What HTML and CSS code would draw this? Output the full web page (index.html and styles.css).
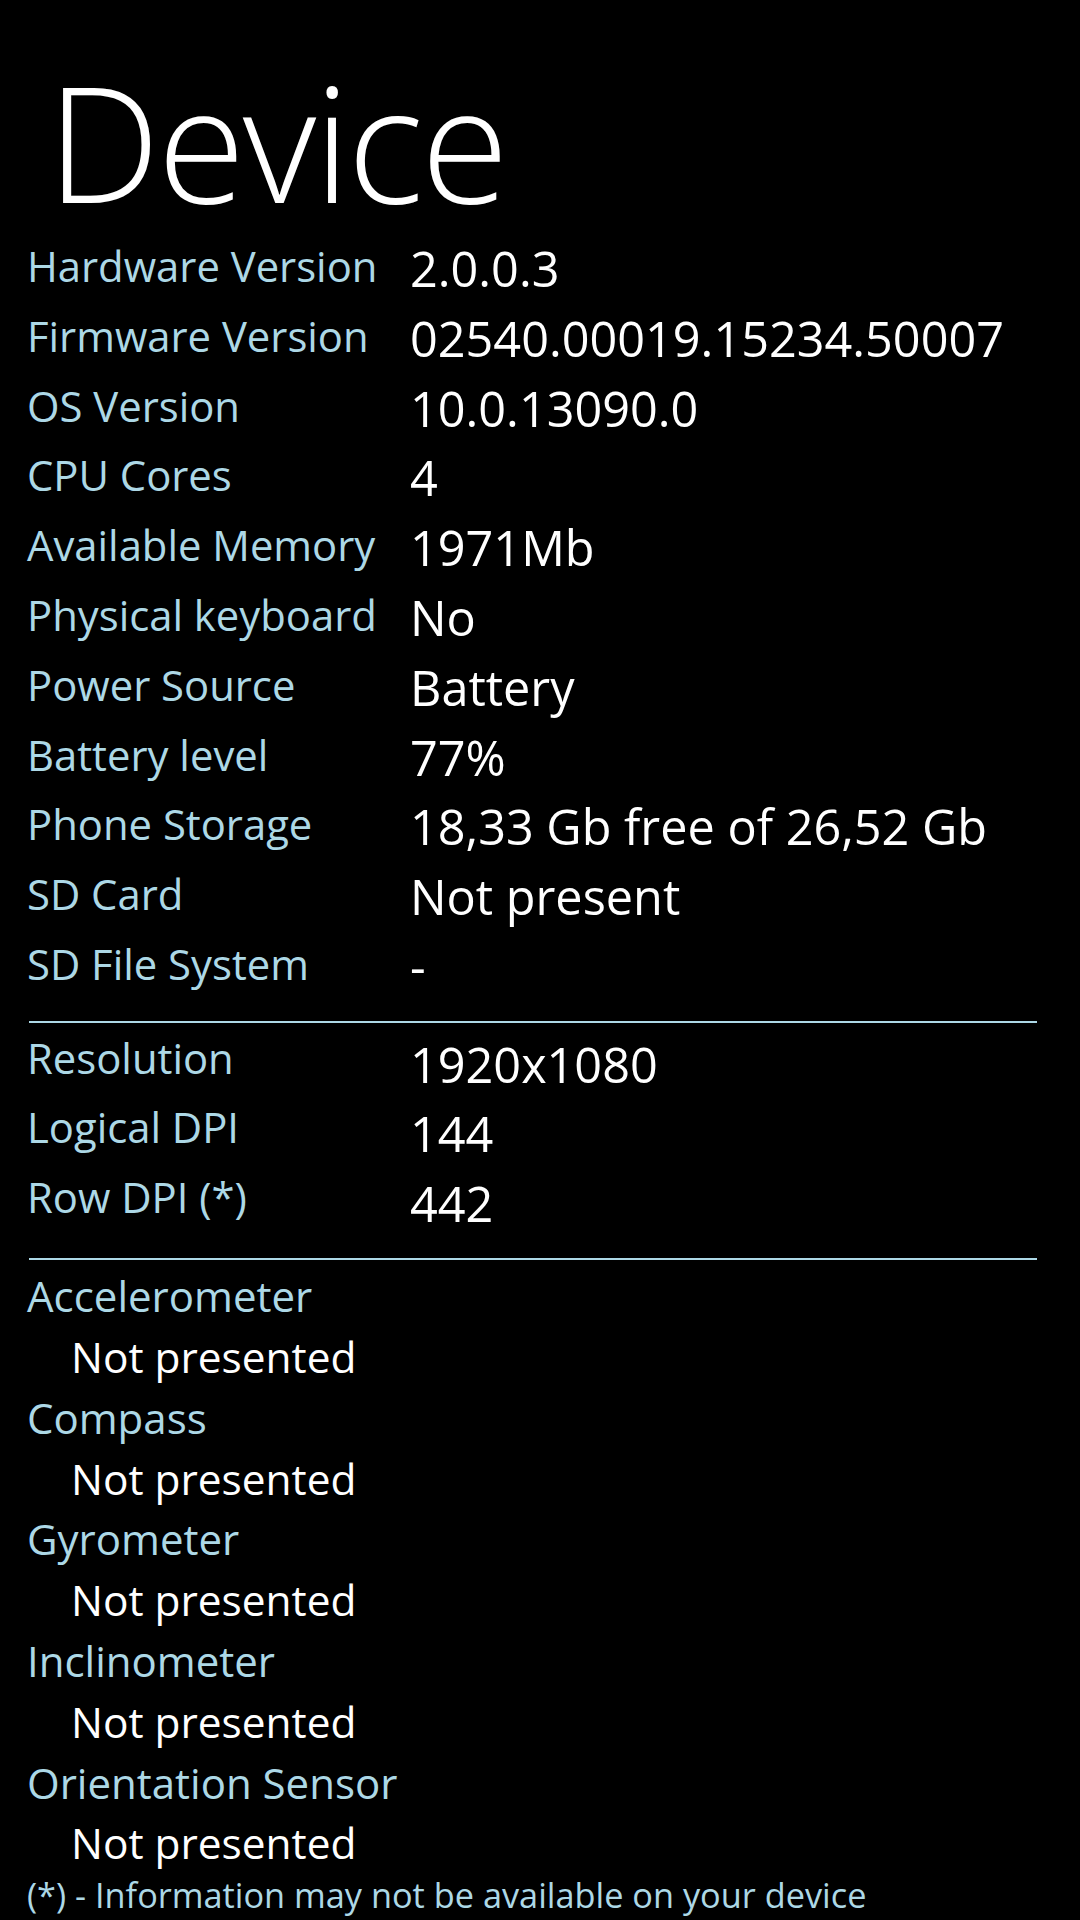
FILE: index.html
```html
<!DOCTYPE html>
<html lang="en">
<head>
<meta charset="UTF-8">
<meta name="viewport" content="width=device-width, initial-scale=1.0">
<title>Device</title>
<link rel="stylesheet" href="styles.css">
</head>
<body>
<div class="page">
  <h1 class="title">Device</h1>

  <div class="info">
    <span class="label">Hardware Version</span><span class="value">2.0.0.3</span>
    <span class="label">Firmware Version</span><span class="value">02540.00019.15234.50007</span>
    <span class="label">OS Version</span><span class="value">10.0.13090.0</span>
    <span class="label">CPU Cores</span><span class="value">4</span>
    <span class="label">Available Memory</span><span class="value">1971Mb</span>
    <span class="label">Physical keyboard</span><span class="value">No</span>
    <span class="label">Power Source</span><span class="value">Battery</span>
    <span class="label">Battery level</span><span class="value">77%</span>
    <span class="label">Phone Storage</span><span class="value">18,33 Gb free of 26,52 Gb</span>
    <span class="label">SD Card</span><span class="value">Not present</span>
    <span class="label">SD File System</span><span class="value">-</span>
  </div>

  <div class="divider"></div>

  <div class="info display">
    <span class="label">Resolution</span><span class="value">1920x1080</span>
    <span class="label">Logical DPI</span><span class="value">144</span>
    <span class="label">Row DPI (*)</span><span class="value">442</span>
  </div>

  <div class="divider"></div>

  <div class="sensors">
    <div class="sensor-name">Accelerometer</div>
    <div class="sensor-state">Not presented</div>
    <div class="sensor-name">Compass</div>
    <div class="sensor-state">Not presented</div>
    <div class="sensor-name">Gyrometer</div>
    <div class="sensor-state">Not presented</div>
    <div class="sensor-name">Inclinometer</div>
    <div class="sensor-state">Not presented</div>
    <div class="sensor-name">Orientation Sensor</div>
    <div class="sensor-state">Not presented</div>
  </div>

  <div class="note">(*) - Information may not be available on your device</div>
</div>
</body>
</html>
```

FILE: styles.css
```css
body {
  margin: 0;
  background-color: #000;
  font-family: "Open Sans", "Noto Sans", sans-serif;
  color: #fff;
}

.page {
  width: 1080px;
  height: 1920px;
  padding-left: 27px;
  box-sizing: border-box;
  overflow: hidden;
}

.title {
  margin: 0 0 10px 20px;
  padding-top: 61px;
  font-size: 160px;
  font-weight: 300;
  line-height: 160px;
  letter-spacing: -2.5px;
}

.info {
  display: grid;
  grid-template-columns: 383px 1fr;
  grid-auto-rows: 69.8px;
}

.label {
  color: #add8e6;
  font-size: 41.8px;
  line-height: 69.8px;
  white-space: nowrap;
}

.value {
  font-size: 48.6px;
  line-height: 69.8px;
  padding-top: 3px;
  white-space: nowrap;
}

.info.display {
  grid-auto-rows: 69.5px;
}

.info.display .value {
  padding-top: 7px;
}

.divider {
  height: 2px;
  margin: 22px 43px 0 2px;
  background-color: #add8e6;
}

.info.display + .divider {
  margin-top: 27px;
}

.sensors {
  margin-top: 6px;
}

.sensor-name {
  color: #add8e6;
  font-size: 42px;
  line-height: 60.8px;
}

.sensor-state {
  padding-left: 44px;
  font-size: 42.4px;
  line-height: 60.8px;
}

.note {
  margin-top: 6px;
  color: #add8e6;
  font-size: 34.3px;
  line-height: 30px;
  white-space: nowrap;
}
```
